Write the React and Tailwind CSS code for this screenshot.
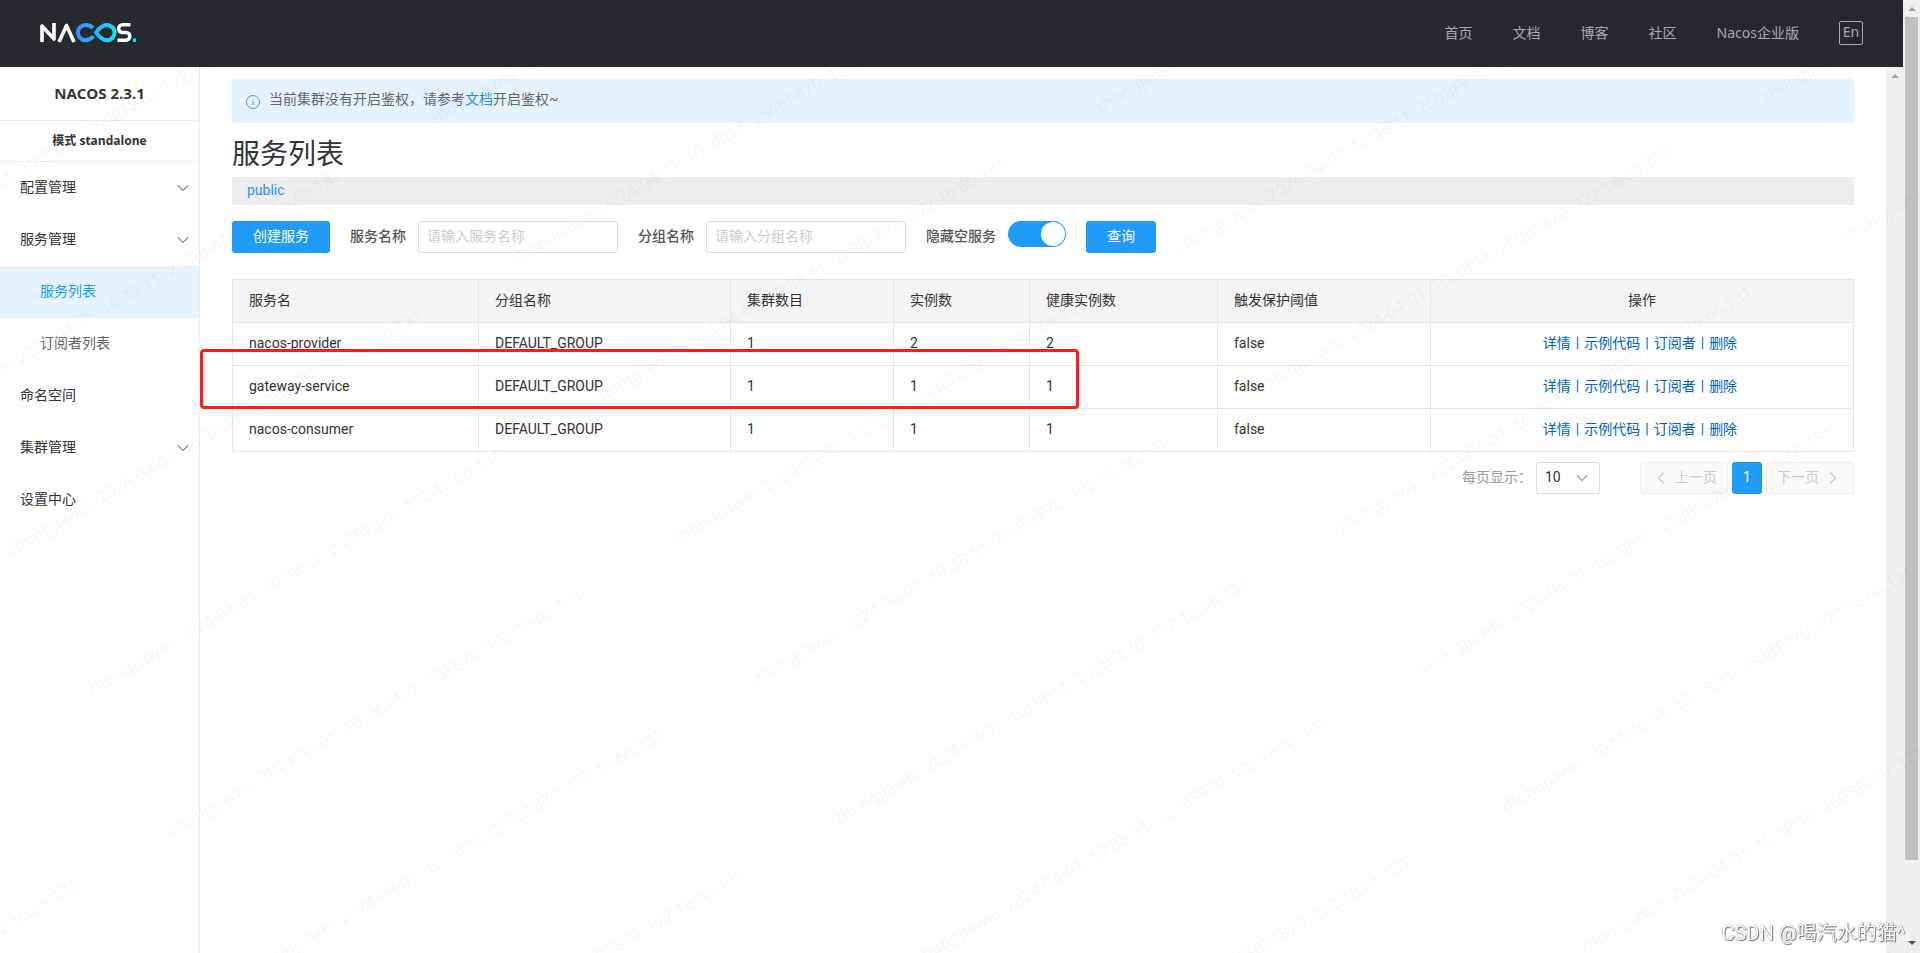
import { ChevronDown, ChevronLeft, ChevronRight } from "lucide-react";

const navLinks = ["首页", "文档", "博客", "社区", "Nacos企业版"];

const menu = [
  { label: "配置管理", arrow: true },
  { label: "服务管理", arrow: true },
  { label: "服务列表", child: true, active: true },
  { label: "订阅者列表", child: true },
  { label: "命名空间" },
  { label: "集群管理", arrow: true },
  { label: "设置中心" },
];

const columns = ["服务名", "分组名称", "集群数目", "实例数", "健康实例数", "触发保护阈值"];

const services = [
  ["nacos-provider", "DEFAULT_GROUP", "1", "2", "2", "false"],
  ["gateway-service", "DEFAULT_GROUP", "1", "1", "1", "false"],
  ["nacos-consumer", "DEFAULT_GROUP", "1", "1", "1", "false"],
];

const actions = ["详情", "示例代码", "订阅者", "删除"];

function Logo() {
  return (
    <svg width="98" height="22" viewBox="0 0 98 22" fill="none" aria-label="NACOS">
      <defs>
        <linearGradient id="loop" x1="36" y1="0" x2="76" y2="0" gradientUnits="userSpaceOnUse">
          <stop offset="0" stopColor="#3f86ff" />
          <stop offset="1" stopColor="#16e2f5" />
        </linearGradient>
      </defs>
      <path d="M2 20V4L14 17V1" stroke="#fff" strokeWidth="3.6" strokeLinejoin="round" />
      <path d="M19 20L26.5 3.5L34 20" stroke="#fff" strokeWidth="3.6" strokeLinejoin="round" />
      <path
        d="M53 6C51 3.8 48.500 3 45.500 3A7.600 7.600 0 0 0 45.500 18.200C49 18.200 51.500 16.500 53.500 14.200"
        stroke="url(#loop)"
        strokeWidth="4"
      />
      <path
        d="M56 10.600C59 6.500 62 3 67 3A7.600 7.600 0 0 1 67 18.200C62 18.200 59 14.700 56 10.600Z"
        stroke="url(#loop)"
        strokeWidth="4"
        strokeLinejoin="round"
      />
      <path d="M90.500 2.800H82.500A3.600 3.600 0 0 0 82.500 10.500H86A3.800 3.800 0 0 1 86 18.200H77.500" stroke="#fff" strokeWidth="3.6" />
      <rect x="93" y="16.500" width="3" height="3.500" fill="#16e2f5" />
    </svg>
  );
}

function Header() {
  return (
    <header className="flex h-[67px] items-center justify-between bg-[#252a2f] px-10 pb-0.5">
      <a href="#home"><Logo /></a>
      <nav className="flex items-center gap-10 font-['Noto_Sans','Noto_Sans_CJK_SC',sans-serif] text-sm text-[#a8aaac]">
        {navLinks.map((item) => (
          <a key={item} href="#nav">{item}</a>
        ))}
        <button className="flex size-6 items-center justify-center rounded-xs border border-[#a8aaac] pb-0.5 text-sm leading-5">En</button>
      </nav>
    </header>
  );
}

function Sidebar() {
  return (
    <aside className="w-[200px] shrink-0 border-r border-[#ebebeb]">
      <h1 className="flex h-[54px] items-center justify-center border-b border-[#ebebeb] font-['Open_Sans','Noto_Sans_CJK_SC',sans-serif] text-[15px] font-bold">
        NACOS 2.3.1
      </h1>
      <h2 className="flex h-[41px] items-center justify-center border-b border-[#ebebeb] font-['Open_Sans','Noto_Sans_CJK_SC',sans-serif] text-xs font-bold">
        模式 standalone
      </h2>
      <ul>
        {menu.map((item) => (
          <li key={item.label}>
            <a
              href="#menu"
              className={
                item.active
                  ? "flex h-[52px] items-center bg-[#e4f3fe] pb-0.5 pl-10 text-[#209bfa]"
                  : item.child
                    ? "flex h-[52px] items-center pb-0.5 pl-10 text-[#666]"
                    : "flex h-[52px] items-center justify-between pr-1.5 pb-0.5 pl-5"
              }
            >
              {item.label}
              {item.arrow && <ChevronDown size={20} strokeWidth={1.25} className="mt-0.5 text-[#666]" />}
            </a>
          </li>
        ))}
      </ul>
    </aside>
  );
}

function Notice() {
  return (
    <div className="flex h-11 gap-2 rounded-[3px] bg-[#e4f3fe] px-[13px] pt-2.5 text-[#666]">
      <svg width="16" height="16" viewBox="0 0 16 16" fill="none" stroke="#5a8cff" className="mt-[5px]">
        <circle cx="8" cy="8" r="6.500" />
        <path d="M8 7V11M8 5V6" />
      </svg>
      <p>
        当前集群没有开启鉴权，请参考<a href="#docs" className="text-[#298dff]">文档</a>开启鉴权~
      </p>
    </div>
  );
}

function Filters() {
  return (
    <form className="mt-4 flex h-8 items-center gap-5">
      <button type="button" className="h-8 w-[98px] rounded-[3px] bg-[#209bfa] pb-0.5 text-white">创建服务</button>
      <label className="flex items-center gap-3 font-medium text-[#555]">
        <span className="pb-0.5">服务名称</span>
        <input placeholder="请输入服务名称" className="h-8 w-[200px] rounded-[3px] border border-[#ddd] px-2 pb-0.5 font-normal placeholder:text-[#ccc]" />
      </label>
      <label className="flex items-center gap-3 font-medium text-[#555]">
        <span className="pb-0.5">分组名称</span>
        <input placeholder="请输入分组名称" className="h-8 w-[200px] rounded-[3px] border border-[#ddd] px-2 pb-0.5 font-normal placeholder:text-[#ccc]" />
      </label>
      <label className="flex h-8 gap-3 font-medium text-[#555]">
        <span className="self-center pb-0.5">隐藏空服务</span>
        <input type="checkbox" role="switch" defaultChecked className="peer sr-only" />
        <span className="flex h-[26px] w-[58px] justify-end rounded-full bg-[#209bfa] p-px">
          <span className="size-6 rounded-full bg-white" />
        </span>
      </label>
      <button type="button" className="h-8 w-[70px] rounded-[3px] bg-[#209bfa] pb-0.5 text-white">查询</button>
    </form>
  );
}

function ServiceTable() {
  return (
    <div className="relative mt-[26px]">
      <table className="w-full table-fixed border-collapse text-left">
        <colgroup>
          <col className="w-[246px]" />
          <col className="w-[252px]" />
          <col className="w-[163px]" />
          <col className="w-[136px]" />
          <col className="w-[188px]" />
          <col className="w-[213px]" />
          <col />
        </colgroup>
        <thead>
          <tr className="h-[43px] bg-[#f4f4f4]">
            {columns.map((name) => (
              <th key={name} className="border border-[#e6e6e6] px-4 pb-0.5 font-normal">{name}</th>
            ))}
            <th className="border border-[#e6e6e6] px-4 pb-0.5 text-center font-normal">操作</th>
          </tr>
        </thead>
        <tbody>
          {services.map((row) => (
            <tr key={row[0]} className="h-[43px]">
              {row.map((cell, i) => (
                <td key={i} className="border border-[#e6e6e6] px-4 pb-0.5">{cell}</td>
              ))}
              <td className="border border-[#e6e6e6] pr-5 pb-0.5 pl-4 text-center text-[#0064c8]">
                {actions.map((action, i) => (
                  <span key={action}>
                    {i > 0 && <span className="mx-[5px]">|</span>}
                    <a href="#action">{action}</a>
                  </span>
                ))}
              </td>
            </tr>
          ))}
        </tbody>
      </table>
      {/* highlight around gateway-service */}
      <div className="absolute top-[70px] -left-8 h-[60px] w-[879px] rounded-sm border-3 border-[#ff1f12]" />
    </div>
  );
}

function Pagination() {
  return (
    <div className="mt-2.5 flex h-8 items-center justify-end">
      <label htmlFor="page-size" className="mr-1 pb-0.5 text-[#999]">每页显示：</label>
      <div className="relative mr-10">
        <select id="page-size" className="block h-8 w-16 appearance-none rounded-[3px] border border-[#ddd] bg-white pb-0.5 pl-2">
          <option>10</option>
        </select>
        <ChevronDown size={20} strokeWidth={1.25} className="pointer-events-none absolute top-1.5 right-2 text-[#888]" />
      </div>
      <div className="flex gap-1">
        <button disabled className="flex h-8 w-[88px] items-center justify-end gap-1 rounded-[3px] border border-[#eee] bg-[#fafafa] pr-2.5 pb-0.5 text-[#ccc]">
          <ChevronLeft size={20} strokeWidth={1.5} className="mt-0.5" />
          上一页
        </button>
        <button className="h-8 w-[30px] rounded-[3px] bg-[#209bfa] pb-0.5 text-white">1</button>
        <button disabled className="flex h-8 w-[88px] items-center gap-1 rounded-[3px] border border-[#eee] bg-[#fafafa] pb-0.5 pl-2.5 text-[#ccc]">
          下一页
          <ChevronRight size={20} strokeWidth={1.5} className="mt-0.5" />
        </button>
      </div>
    </div>
  );
}

function Watermark() {
  return (
    <svg className="pointer-events-none fixed inset-0 size-full" aria-hidden="true">
      <defs>
        <pattern id="mark" width="582" height="161.500" patternUnits="userSpaceOnUse" patternTransform="translate(16 567) rotate(-30)">
          <text x="1" y="150" fontSize="17" fontFamily="Noto Sans" xmlSpace="preserve" fill="#000" fillOpacity="0.03">
            zhongjiawei  2024-04-01  10:38:11  250BF870  172.16.66.131
          </text>
        </pattern>
      </defs>
      <rect width="100%" height="100%" fill="url(#mark)" />
    </svg>
  );
}

export default function App() {
  return (
    <div className="flex h-screen overflow-hidden bg-white font-[Roboto,'Noto_Sans_CJK_SC',sans-serif] text-sm text-[#333]">
      <div className="flex min-w-0 flex-1 flex-col">
        <Header />
        <div className="flex min-h-0 flex-1">
          <Sidebar />
          <main className="min-w-0 flex-1 px-8 pt-3">
            <Notice />
            <h2 className="mt-3 flex h-[42px] items-center pb-0.5 text-[28px]">服务列表</h2>
            <div className="flex h-7 items-center bg-[#ededed] px-[15px] pb-0.5 text-[#298dff]">public</div>
            <Filters />
            <ServiceTable />
            <Pagination />
          </main>
          <div className="flex w-[17px] justify-center bg-[#f0f0f0] pt-[7px]">
            <div className="h-0 border-x-4 border-b-4 border-x-transparent border-b-[#a3a3a3]" />
          </div>
        </div>
      </div>
      <div className="flex w-[17px] flex-col items-center bg-[#f0f0f0] pt-[7px] pb-2">
        <div className="h-0 border-x-4 border-b-4 border-x-transparent border-b-[#a3a3a3]" />
        <div className="mt-1.5 h-[843px] w-[13px] bg-[#c1c1c1]" />
        <div className="mt-auto h-0 border-x-4 border-t-4 border-x-transparent border-t-[#505050]" />
      </div>
      <Watermark />
      <div className="pointer-events-none fixed right-[15px] bottom-1.5 text-xl leading-7 text-white [text-shadow:0_0_1px_#555,1px_1px_1px_#777]">
        CSDN @喝汽水的猫^
      </div>
    </div>
  );
}
